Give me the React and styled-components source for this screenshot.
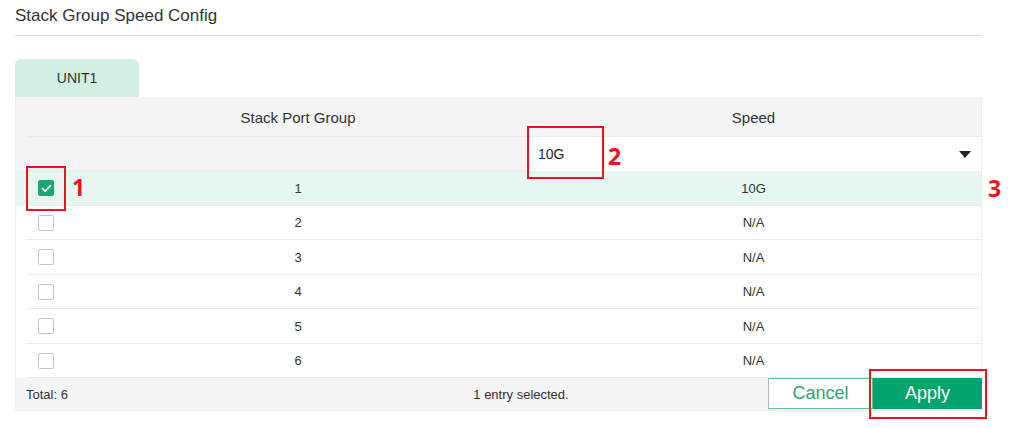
import React from "react";
import styled, { createGlobalStyle } from "styled-components";

const GlobalStyle = createGlobalStyle`
  html, body {
    margin: 0;
    padding: 0;
    background: #ffffff;
  }
  body {
    font-family: "Liberation Sans", Arial, sans-serif;
    color: #333333;
  }
`;

const GREEN = "#02a46d";
const MARK = "#e8151c";
const LINE = "#ebebeb";

const Page = styled.div`
  position: relative;
  width: 1019px;
  height: 428px;
  padding-left: 15px;
  box-sizing: border-box;
`;

const Content = styled.div`
  width: 967px;
`;

const Title = styled.h1`
  margin: 0;
  height: 36px;
  box-sizing: border-box;
  padding-top: 6px;
  font-size: 17px;
  font-weight: normal;
  line-height: 20px;
  color: #333;
  border-bottom: 1px solid #dcdcdc;
`;

const Tabs = styled.div`
  display: flex;
  margin-top: 23px;
`;

const Tab = styled.div`
  width: 124px;
  height: 38px;
  display: flex;
  align-items: center;
  justify-content: center;
  background: #d3efe4;
  border-radius: 6px 6px 0 0;
  font-size: 14px;
  color: #333;
`;

const Table = styled.div`
  border: 1px solid #ededed;
  border-top: none;
`;

// row separators stop short of the table edges
const Row = styled.div`
  display: grid;
  grid-template-columns: 54px 456px 1fr;
  height: ${(p) => p.h || 34.5}px;
  align-items: center;
  background: linear-gradient(${LINE}, ${LINE}) no-repeat left 11px bottom / calc(100% - 11px) 1px,
    ${(p) => p.bg || "#ffffff"};
  font-size: 13px;
  color: #333;
`;

const HeadCell = styled.div`
  text-align: center;
  font-size: 15px;
  color: #333;
`;

const Cell = styled.div`
  text-align: center;
`;

const CheckCell = styled.div`
  display: flex;
  align-items: center;
  padding-left: 22px;
`;

const Box = styled.span`
  width: 16px;
  height: 16px;
  box-sizing: border-box;
  border-radius: 2px;
  display: flex;
  align-items: center;
  justify-content: center;
  border: 1px solid ${(p) => (p.checked ? "#1ba672" : "#c4c4c4")};
  background: ${(p) => (p.checked ? "#1ba672" : "#ffffff")};
`;

const Select = styled.div`
  height: 100%;
  background: #ffffff;
  display: flex;
  align-items: center;
  justify-content: space-between;
  padding: 0 10px 0 12px;
  font-size: 14px;
  color: #1d2433;
`;

const Caret = styled.span`
  width: 0;
  height: 0;
  border-left: 6px solid transparent;
  border-right: 6px solid transparent;
  border-top: 7px solid #222;
`;

const Footer = styled.div`
  display: grid;
  grid-template-columns: 395px 220px 1fr;
  align-items: center;
  height: 32px;
  background: #f5f5f5;
  font-size: 13px;
  color: #333;
`;

const Total = styled.div`
  padding-left: 10px;
`;

const Actions = styled.div`
  display: flex;
  justify-content: flex-end;
  height: 31px;
  align-self: start;
  margin-right: -1px;
`;

const Button = styled.button`
  font-family: "Liberation Sans", Arial, sans-serif;
  font-size: 18px;
  height: 31px;
  margin: 0;
  padding: 0;
  cursor: pointer;
  border: 1px solid ${(p) => (p.primary ? GREEN : "#5fbf9c")};
  border-left-color: ${(p) => (p.primary ? GREEN : "#b5b5b5")};
  background: ${(p) => (p.primary ? GREEN : "#ffffff")};
  color: ${(p) => (p.primary ? "#ffffff" : "#2ea57c")};
  width: ${(p) => p.w}px;
`;

const MarkBox = styled.div`
  position: absolute;
  border: 2px solid ${MARK};
  box-sizing: border-box;
`;

const MarkNum = styled.span`
  position: absolute;
  font-family: "Open Sans", "Noto Sans", sans-serif;
  font-weight: 700;
  font-size: 23px;
  line-height: 1;
  color: ${MARK};
`;

const Tick = () => (
  <svg width="11" height="9" viewBox="0 0 11 9">
    <path d="M1.5 4.6 L4.2 7.2 L9.5 1.6" fill="none" stroke="#fff" strokeWidth="1.8" strokeLinecap="round" strokeLinejoin="round" />
  </svg>
);

const ports = [
  { id: 1, speed: "10G", checked: true },
  { id: 2, speed: "N/A" },
  { id: 3, speed: "N/A" },
  { id: 4, speed: "N/A" },
  { id: 5, speed: "N/A" },
  { id: 6, speed: "N/A" },
];

export default function App() {
  return (
    <>
      <GlobalStyle />
      <Page>
        <Content>
          <Title>Stack Group Speed Config</Title>
          <Tabs>
            <Tab>UNIT1</Tab>
          </Tabs>
          <Table>
            <Row h={40} bg="#f5f5f5">
              <div />
              <HeadCell>Stack Port Group</HeadCell>
              <HeadCell>Speed</HeadCell>
            </Row>
            <Row h={34} bg="#f5f5f5">
              <div />
              <div />
              <Select>
                <span>10G</span>
                <Caret />
              </Select>
            </Row>
            {ports.map((p) => (
              <Row key={p.id} bg={p.checked ? "#e6f6f0" : "#ffffff"}>
                <CheckCell>
                  <Box checked={p.checked}>{p.checked && <Tick />}</Box>
                </CheckCell>
                <Cell>{p.id}</Cell>
                <Cell>{p.speed}</Cell>
              </Row>
            ))}
            <Footer>
              <Total>Total: 6</Total>
              <Cell>1 entry selected.</Cell>
              <Actions>
                <Button w={105}>Cancel</Button>
                <Button primary w={109}>Apply</Button>
              </Actions>
            </Footer>
          </Table>
        </Content>

        <MarkBox style={{ left: 26, top: 166, width: 40, height: 45 }} />
        <MarkNum style={{ left: 72, top: 176 }}>1</MarkNum>
        <MarkBox style={{ left: 527, top: 126, width: 77, height: 53 }} />
        <MarkNum style={{ left: 608, top: 145 }}>2</MarkNum>
        <MarkNum style={{ left: 988, top: 177 }}>3</MarkNum>
        <MarkBox style={{ left: 869, top: 369, width: 118, height: 50 }} />
      </Page>
    </>
  );
}
